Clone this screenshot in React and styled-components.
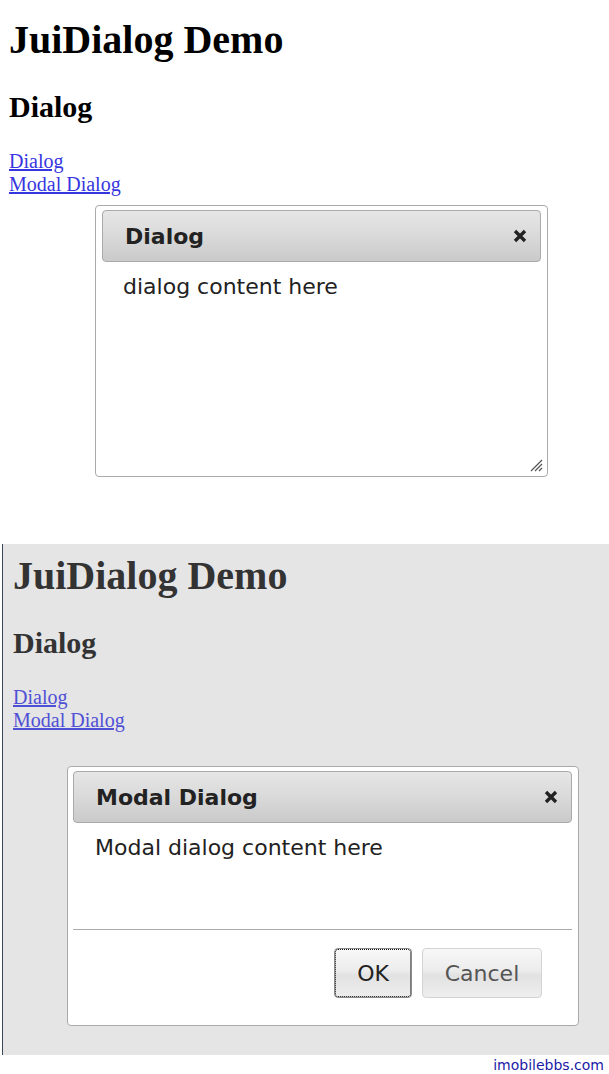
import React from "react";
import styled, { createGlobalStyle } from "styled-components";

const GlobalStyle = createGlobalStyle`
  html, body {
    margin: 0;
    padding: 0;
    background: #fff;
  }
  #root {
    width: 609px;
    height: 1074px;
    overflow: hidden;
  }
`;

const Page = styled("div")`
  width: 609px;
  height: 1074px;
  display: flex;
  flex-direction: column;
  font-family: "Liberation Serif", "Times New Roman", serif;
`;

const Frame = styled("section")`
  box-sizing: border-box;
  height: ${(props) => props.$height}px;
  margin-left: ${(props) => (props.$shaded ? 2 : 0)}px;
  padding: ${(props) => (props.$shaded ? "9px 0 0 10px" : "17px 0 0 9px")};
  background: ${(props) => (props.$shaded ? "#e5e5e5" : "#fff")};
  border-left: ${(props) => (props.$shaded ? "1px solid #3c4858" : "none")};
  color: ${(props) => (props.$shaded ? "#333" : "#000")};
  overflow: hidden;
`;

const Title = styled("h1")`
  margin: 0;
  font-size: 40px;
  line-height: 46px;
  font-weight: bold;
`;

const SubTitle = styled("h2")`
  margin: 26px 0 0;
  font-size: 30px;
  line-height: 35px;
  font-weight: bold;
`;

const Links = styled("p")`
  margin: 26px 0 0;
  font-size: 20px;
  line-height: 23px;
  display: flex;
  flex-direction: column;
  align-items: flex-start;
`;

const Link = styled("a")`
  color: ${(props) => (props.$dim ? "#5050d6" : "#3636e0")};
  text-decoration: underline;
  cursor: pointer;
`;

const Dialog = styled("div")`
  box-sizing: border-box;
  position: relative;
  width: ${(props) => props.$width}px;
  height: ${(props) => props.$height}px;
  margin: ${(props) => props.$margin};
  padding: 4px 6px 0 ${(props) => props.$inset}px;
  background: #fff;
  border: 1px solid #aaa;
  border-radius: 4px;
  display: flex;
  flex-direction: column;
  font-family: "DejaVu Sans", Verdana, sans-serif;
  color: #222;
`;

const TitleBar = styled("div")`
  box-sizing: border-box;
  height: 52px;
  flex: none;
  display: flex;
  align-items: center;
  justify-content: space-between;
  padding: 0 13px 0 22px;
  border: 1px solid #aaa;
  border-radius: 4px;
  background: linear-gradient(#e6e6e6 0%, #dcdcdc 40%, #cacaca 100%);
`;

const TitleText = styled("span")`
  font-size: 22px;
  font-weight: bold;
  color: #222;
`;

const CloseIcon = styled("svg")`
  width: 14px;
  height: 14px;
  display: block;
`;

const Content = styled("div")`
  box-sizing: border-box;
  flex: ${(props) => (props.$grow ? 1 : "none")};
  height: ${(props) => (props.$height ? `${props.$height}px` : "auto")};
  padding: 12px 0 0 ${(props) => props.$indent}px;
  font-size: 22px;
  line-height: 26px;
  color: #222;
`;

const ButtonPane = styled("div")`
  border-top: 1px solid #aaa;
  display: flex;
  justify-content: flex-end;
  gap: 10px;
  padding: 18px 30px 0 0;
`;

const Button = styled("button")`
  box-sizing: border-box;
  width: ${(props) => props.$width}px;
  height: 50px;
  padding: 0;
  font-family: "DejaVu Sans", Verdana, sans-serif;
  font-size: 22px;
  color: ${(props) => (props.$focused ? "#222" : "#555")};
  border: 1px solid ${(props) => (props.$focused ? "#8a8a8a" : "#d3d3d3")};
  border-radius: 4px;
  background: linear-gradient(#f8f8f8 0%, #ececec 45%, #e2e2e2 55%, #eeeeee 100%);
  outline: ${(props) => (props.$focused ? "1px dotted #111" : "none")};
  outline-offset: -2px;
  cursor: pointer;
`;

const Resize = styled("svg")`
  position: absolute;
  right: 4px;
  bottom: 4px;
  width: 14px;
  height: 14px;
`;

const Footer = styled("div")`
  flex: 1;
  display: flex;
  justify-content: flex-end;
  align-items: center;
  padding-right: 5px;
  font-family: "DejaVu Sans", Verdana, sans-serif;
  font-size: 14px;
  color: #1a1aa6;
`;

const Close = () => (
  <CloseIcon viewBox="0 0 14 14">
    <path d="M2 2 L12 12 M12 2 L2 12" stroke="#222" strokeWidth="3.3" strokeLinecap="butt" />
  </CloseIcon>
);

const Header = ({ links }) => (
  <>
    <Title>JuiDialog Demo</Title>
    <SubTitle>Dialog</SubTitle>
    <Links>
      {links.map((l) => (
        <Link key={l.label} $dim={l.dim}>
          {l.label}
        </Link>
      ))}
    </Links>
  </>
);

export default function App() {
  return (
    <Page>
      <GlobalStyle />
      <Frame $height={544}>
        <Header links={[{ label: "Dialog" }, { label: "Modal Dialog" }]} />
        <Dialog $width={453} $height={272} $inset={6} $margin="9px 0 0 86px">
          <TitleBar>
            <TitleText>Dialog</TitleText>
            <Close />
          </TitleBar>
          <Content $grow $indent={21}>dialog content here</Content>
          <Resize viewBox="0 0 14 14">
            <path d="M2 13 L13 2 M6 13 L13 6 M10 13 L13 10" stroke="#555" strokeWidth="1.2" />
          </Resize>
        </Dialog>
      </Frame>
      <Frame $shaded $height={511}>
        <Header links={[{ label: "Dialog", dim: true }, { label: "Modal Dialog", dim: true }]} />
        <Dialog $width={512} $height={260} $inset={5} $margin="34px 0 0 54px">
          <TitleBar>
            <TitleText>Modal Dialog</TitleText>
            <Close />
          </TitleBar>
          <Content $height={106} $indent={22}>Modal dialog content here</Content>
          <ButtonPane>
            <Button $width={78} $focused>OK</Button>
            <Button $width={120}>Cancel</Button>
          </ButtonPane>
        </Dialog>
      </Frame>
      <Footer>imobilebbs.com</Footer>
    </Page>
  );
}
